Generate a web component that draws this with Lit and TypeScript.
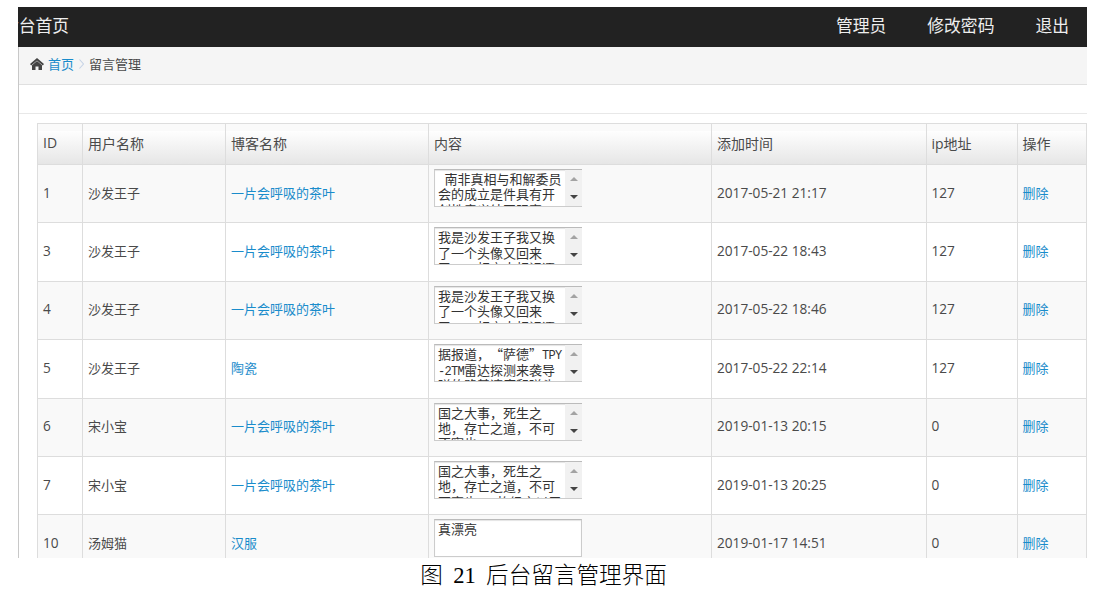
import { LitElement, html, css, svg } from "lit";
import { customElement } from "lit/decorators.js";

interface Message {
  id: number;
  user: string;
  blog: string;
  lines: string[];
  time: string;
  ip: string;
}

const messages: Message[] = [
  { id: 1, user: "沙发王子", blog: "一片会呼吸的茶叶", lines: [" 南非真相与和解委员", "会的成立是件具有开", "创性意义结国际案"], time: "2017-05-21 21:17", ip: "127" },
  { id: 3, user: "沙发王子", blog: "一片会呼吸的茶叶", lines: ["我是沙发王子我又换", "了一个头像又回来", "了一一相交大相识逐"], time: "2017-05-22 18:43", ip: "127" },
  { id: 4, user: "沙发王子", blog: "一片会呼吸的茶叶", lines: ["我是沙发王子我又换", "了一个头像又回来", "了一一相交大相识逐"], time: "2017-05-22 18:46", ip: "127" },
  { id: 5, user: "沙发王子", blog: "陶瓷", lines: ["据报道，“萨德”TPY", "-2TM雷达探测来袭导", "弹的路基速度和弹头"], time: "2017-05-22 22:14", ip: "127" },
  { id: 6, user: "宋小宝", blog: "一片会呼吸的茶叶", lines: ["国之大事，死生之", "地，存亡之道，不可", "不察也"], time: "2019-01-13 20:15", ip: "0" },
  { id: 7, user: "宋小宝", blog: "一片会呼吸的茶叶", lines: ["国之大事，死生之", "地，存亡之道，不可", "不察也。 故经之以五"], time: "2019-01-13 20:25", ip: "0" },
  { id: 10, user: "汤姆猫", blog: "汉服", lines: ["真漂亮"], time: "2019-01-17 14:51", ip: "0" },
];

@customElement("app-root")
export class AppRoot extends LitElement {
  static styles = css`
    :host {
      display: block;
      box-sizing: border-box;
      height: 595px;
      padding: 7px 16px 0 18px;
      overflow: hidden;
      background: #fff;
      color: #4a4a4a;
      font-family: "Open Sans", "Noto Sans CJK SC", sans-serif;
      font-size: 13px;
    }
    .frame {
      height: 551px;
      overflow: hidden;
    }
    .top {
      display: flex;
      align-items: center;
      height: 40px;
      padding-bottom: 5px;
      box-sizing: border-box;
      background: #222;
      color: #eee;
      font-size: 16.8px;
      overflow: hidden;
      white-space: nowrap;
    }
    .brand {
      margin-left: -16px;
      margin-right: auto;
    }
    .nav {
      display: flex;
      gap: 41px;
      padding-right: 18px;
    }
    .main {
      border-left: 1px solid #c8c8c8;
      height: 511px;
      overflow: hidden;
    }
    .crumbs {
      display: flex;
      align-items: center;
      height: 38px;
      padding: 0 0 4px 11px;
      box-sizing: border-box;
      background: #f5f5f5;
      border-bottom: 1px solid #e0e0e0;
    }
    .home {
      width: 14px;
      height: 12px;
      margin-right: 4px;
    }
    .sep {
      width: 5px;
      height: 10px;
      margin: 0 5px;
    }
    .link {
      color: #1a8ccb;
    }
    .blank {
      height: 28px;
      border-bottom: 1px solid #e8e8e8;
      margin-bottom: 9px;
    }
    .row {
      display: grid;
      grid-template-columns: 45px 143px 203px 283px 214.5px 91px 69.5px;
      box-sizing: border-box;
      width: 1050px;
      height: 58.4px;
      margin-left: 18px;
      border-left: 1px solid #ddd;
      border-bottom: 1px solid #ddd;
      background: #fff;
    }
    .odd {
      background: #f9f9f9;
    }
    .head {
      height: 42px;
      border-top: 1px solid #ddd;
      background: linear-gradient(#fafafa 0 7px, #fefefe 7px, #e6e6e6);
      font-size: 14px;
    }
    .cell {
      display: flex;
      align-items: center;
      padding: 0 0 3px 5px;
      border-right: 1px solid #ddd;
      white-space: nowrap;
      min-width: 0;
    }
    .num {
      font-size: 13.65px;
    }
    .top-aligned {
      align-items: flex-start;
      padding: 4px 0 0 5px;
    }
    .box {
      display: flex;
      box-sizing: border-box;
      width: 148px;
      height: 38px;
      border: 1px solid #ccc;
      border-top-color: #bbb;
      background: #fff;
      overflow: hidden;
      box-shadow: inset 0 1px 1px #e4e4e4;
    }
    .scrolling {
      border-right: 0;
    }
    .lines {
      flex: 1;
      padding: 1px 0 0 3px;
      color: #333;
      font: 13px/15.4px "Noto Sans CJK SC", sans-serif;
      text-spacing-trim: space-all;
    }
    .line {
      height: 15.4px;
      white-space: pre;
    }
    .latin {
      font-family: "Liberation Mono", monospace;
      font-size: 12px;
      line-height: 1;
      letter-spacing: -0.7px;
    }
    .bar {
      display: flex;
      flex-direction: column;
      align-items: center;
      justify-content: space-between;
      box-sizing: border-box;
      width: 17px;
      height: 36px;
      padding: 7px 0;
      background: #f1f1f1;
    }
    .arrow {
      width: 8px;
      height: 4px;
    }
    .caption {
      display: flex;
      justify-content: center;
      gap: 10.4px;
      padding-top: 3px;
      margin-left: -18px;
      color: #000;
      font: 300 22.6px/30px "Liberation Serif", "Noto Sans CJK SC", serif;
    }
  `;

  private renderBox(lines: string[]) {
    const scrolls = lines.length > 2;
    return html`<div class="box ${scrolls ? "scrolling" : ""}">
      <div class="lines">${lines.map((l) => html`<div class="line">${l.split(/([\x20-\x7e]+)/).map((part) => (/^[\x20-\x7e]+$/.test(part) ? html`<span class="latin">${part}</span>` : part))}</div>`)}</div>
      ${scrolls
        ? html`<div class="bar">
            <svg class="arrow" viewBox="0 0 8 4">${svg`<path d="M4 0L8 4H0Z" fill="#a3a3a3"/>`}</svg>
            <svg class="arrow" viewBox="0 0 8 4">${svg`<path d="M0 0H8L4 4Z" fill="#444"/>`}</svg>
          </div>`
        : ""}
    </div>`;
  }

  render() {
    return html`
      <div class="frame">
        <div class="top">
          <div class="brand">后台首页</div>
          <div class="nav"><span>管理员</span><span>修改密码</span><span>退出</span></div>
        </div>
        <div class="main">
          <div class="crumbs">
            <svg class="home" viewBox="0 0 14 12"><path d="M7 2.9L12 7.2V12H8.5V8.5H5.5V12H2V7.2Z" fill="#444" /><path d="M.6 6.7L7 1.2L13.4 6.7" fill="none" stroke="#444" stroke-width="1.8" /></svg>
            <span class="link">首页</span>
            <svg class="sep" viewBox="0 0 5 10"><path d="M.5 .5L4.5 5L.5 9.5" fill="none" stroke="#c5d3e6" stroke-width="1.1" /></svg>
            <span>留言管理</span>
          </div>
          <div class="blank"></div>
          <div class="row head">
            ${["ID", "用户名称", "博客名称", "内容", "添加时间", "ip地址", "操作"].map((t) => html`<div class="cell">${t}</div>`)}
          </div>
          ${messages.map(
            (m, i) => html`<div class="row ${i % 2 ? "" : "odd"}">
              <div class="cell num">${m.id}</div>
              <div class="cell">${m.user}</div>
              <div class="cell link">${m.blog}</div>
              <div class="cell top-aligned">${this.renderBox(m.lines)}</div>
              <div class="cell num">${m.time}</div>
              <div class="cell num">${m.ip}</div>
              <div class="cell link">删除</div>
            </div>`
          )}
        </div>
      </div>
      <div class="caption"><span>图</span><span>21</span><span>后台留言管理界面</span></div>
    `;
  }
}
